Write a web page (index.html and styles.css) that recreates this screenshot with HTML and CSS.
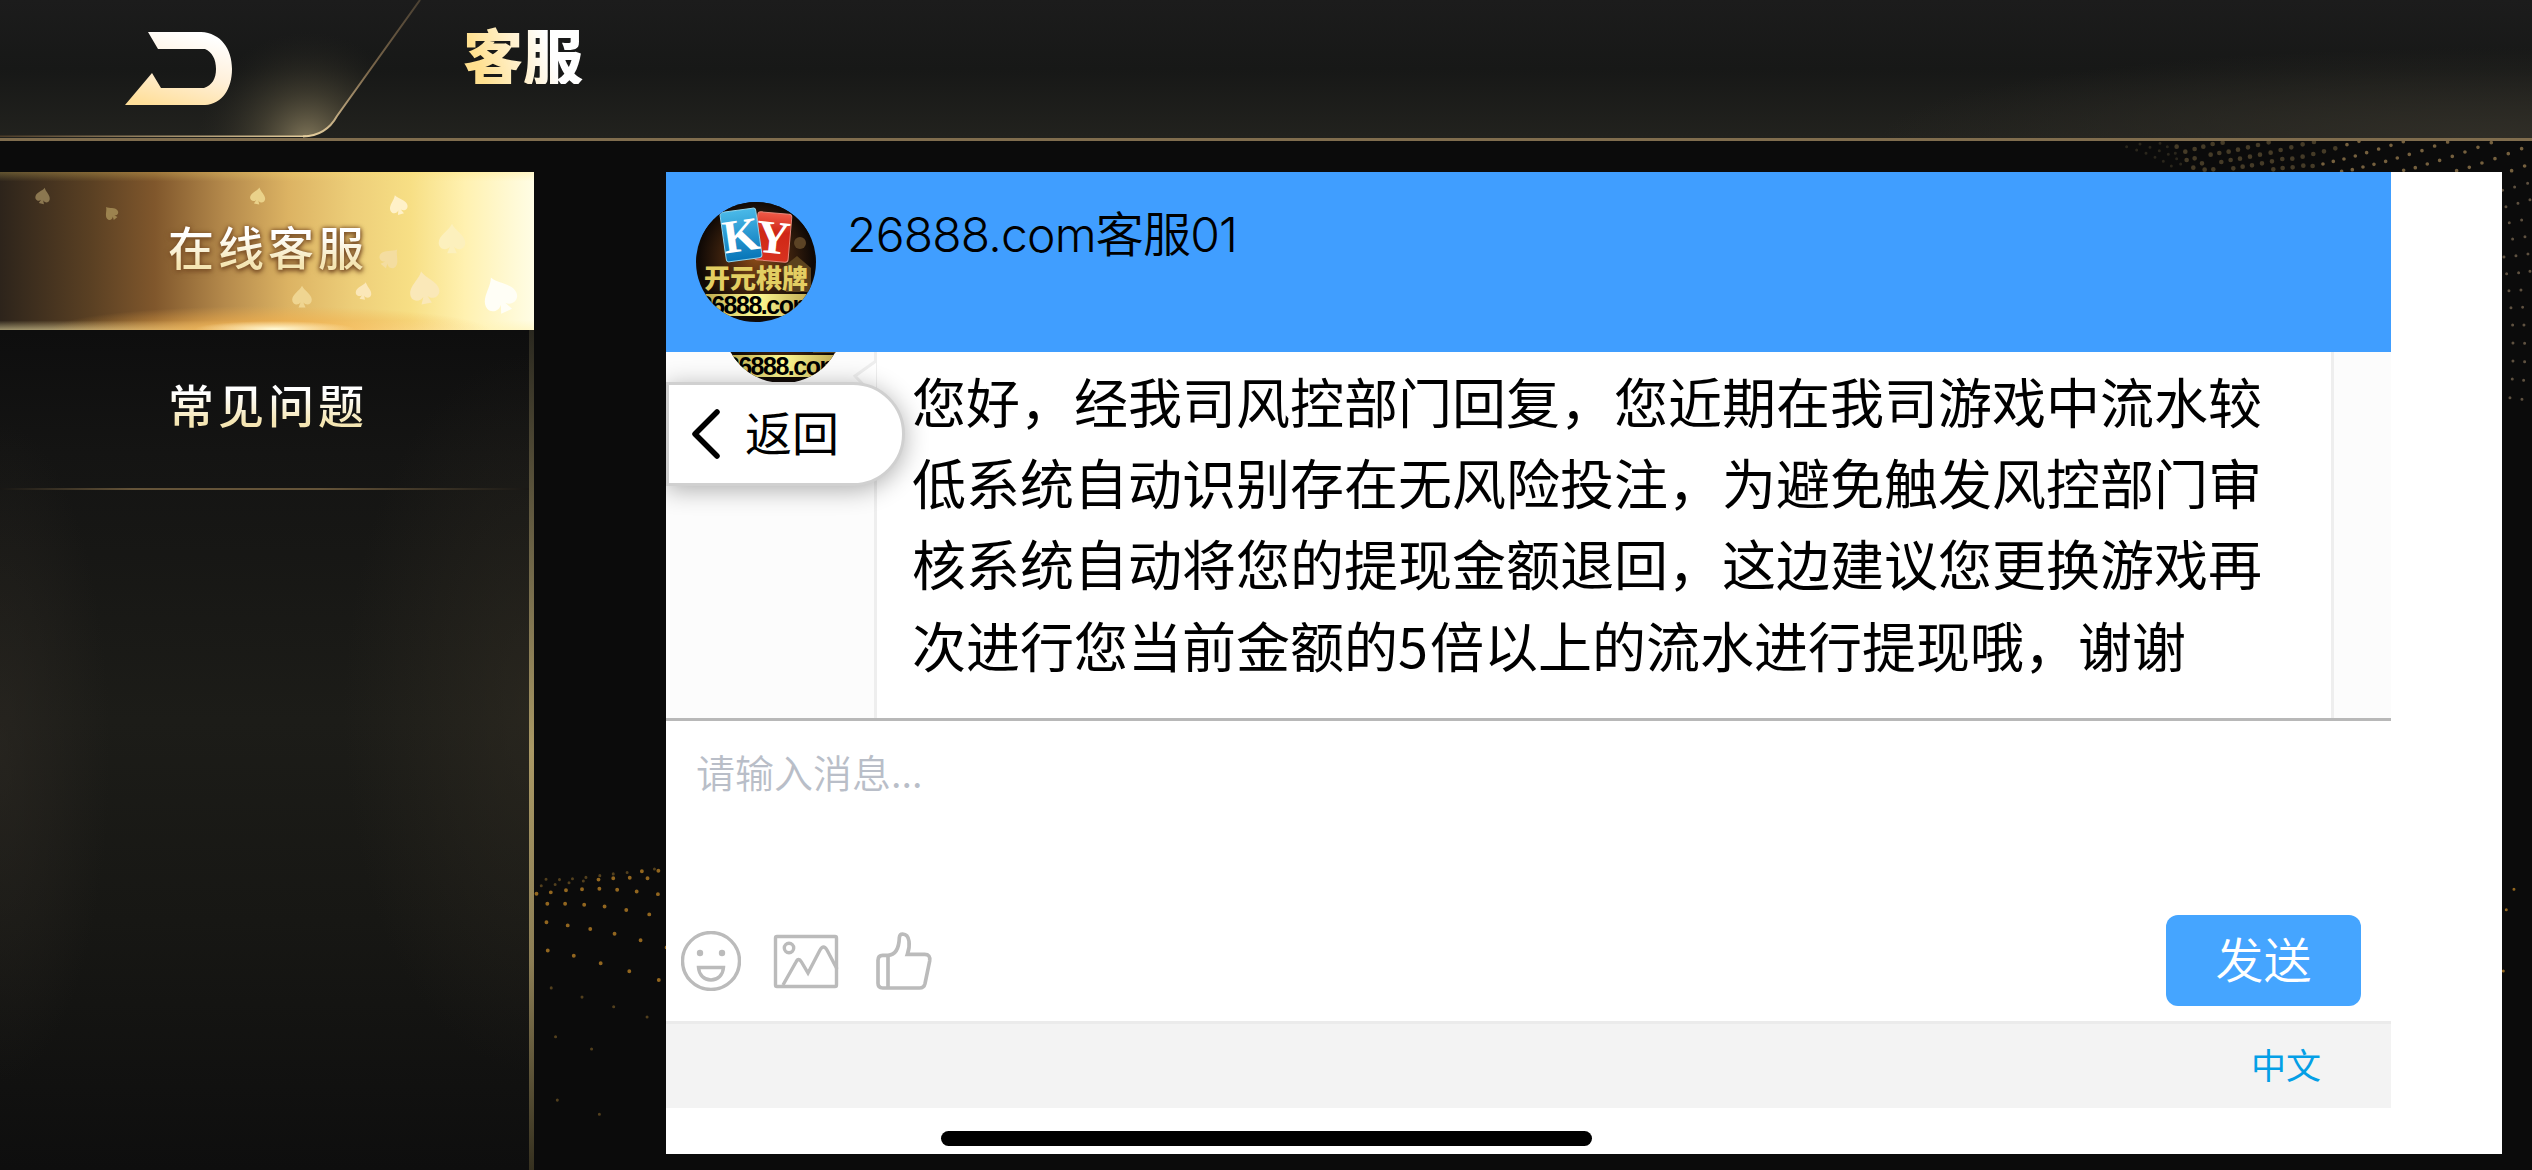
FILE: index.html
```html
<!DOCTYPE html>
<html lang="zh-CN">
<head>
    <meta charset="UTF-8">
    <title>客服</title>
    <link rel="stylesheet" href="styles.css">
</head>
<body>
    <!-- puntos dorados del fondo -->
    <svg class="dots" width="2532" height="1170" viewBox="0 0 2532 1170">
        <g transform="translate(0 480) scale(.4337 .4401)">
            <path class="dot" d="M1237 940h0M1270 937h0M1305 932h0M1342 930h0M1382 929h0M1423 931h0M1468 935h0M1517 941h0M1262 963h0M1303 963h0M1347 965h0M1394 969h0M1444 977h0M1497 987h0M1260 1005h0M1309 1012h0M1361 1020h0M1417 1031h0M1477 1046h0M1537 1062h0M1263 1069h0M1323 1081h0M1385 1098h0M1451 1116h0M1519 1136h0M1480 889h0M1518 888h0M1452 904h0M1493 905h0M1414 905h0M1380 908h0"/>
            <path class="dot dim" d="M1248 922h0M1280 919h0M1312 915h0M1345 911h0M1259 907h0M1290 908h0M1320 906h0M1351 903h0M1383 899h0M1414 895h0M1446 892h0M1509 884h0M1271 1154h0M1342 1175h0M1415 1197h0M1281 1265h0M1364 1293h0M1285 1409h0M1382 1441h0M1492 1220h0"/>
        </g>
        <g transform="translate(2060 100) scale(.3333)">
            <path class="dot gray" d="M200 140h0M230 150h0M258 160h0M285 172h0M310 184h0M334 198h0M240 132h0M270 142h0M298 152h0M325 163h0M350 176h0M300 130h0M322 140h0M346 160h0M362 192h0"/>
            <path class="dot gray big" d="M350 140h0M376 155h0M404 147h0M430 140h0M458 132h0M488 128h0M452 164h0M478 159h0M506 155h0M534 149h0M564 142h0M594 135h0M626 127h0M484 186h0M512 180h0M540 176h0M570 170h0M600 164h0M632 158h0M662 150h0M694 142h0M728 133h0M762 126h0M520 205h0M548 200h0M576 196h0M606 190h0M636 184h0M667 177h0M697 176h0M728 170h0M760 162h0M792 154h0M826 145h0M380 180h0M404 175h0M426 190h0M400 203h0M434 209h0M460 208h0M640 208h0M668 204h0M698 202h0M730 197h0M758 198h0"/>
            <path class="dot tan" d="M861 134h0M897 124h0M789 192h0M820 184h0M852 177h0M886 168h0M920 158h0M956 147h0M993 136h0M1030 125h0M845 214h0M877 209h0M909 201h0M942 193h0M977 184h0M1012 174h0M1048 163h0M1086 152h0M1124 138h0M1163 126h0M1031 211h0M1066 203h0M1102 192h0M1139 181h0M1177 169h0M1215 156h0M1254 142h0M1294 128h0M1190 212h0M1228 202h0M1266 189h0M1305 176h0M1345 161h0M1385 146h0M1355 212h0M1394 198h0"/>
            <path class="dot sand" d="M1328 271h0M1364 261h0M1403 250h0M1338 320h0M1374 310h0M1410 299h0M1348 368h0M1385 360h0M1358 417h0M1395 410h0M1332 471h0M1368 467h0M1404 462h0M1340 521h0M1376 518h0M1410 514h0M1347 572h0M1383 570h0M1353 623h0M1388 622h0M1358 675h0M1392 675h0M1359 729h0M1394 730h0M1359 783h0M1394 785h0M1357 837h0M1391 841h0M1350 893h0M1386 898h0"/>
        </g>
        <g transform="translate(2080 880) scale(.3333)">
            <path class="dot" d="M1302 28h0M1279 89h0M1270 273h0"/>
        </g>
    </svg>

    <header class="topbar">
        <!-- pestaña inclinada -->
        <svg class="topbar-tab" width="430" height="140" viewBox="0 0 430 140">
            <defs>
                <radialGradient id="tabGlow" gradientUnits="userSpaceOnUse" cx="308" cy="142" r="110">
                    <stop offset="0" stop-color="#8e8262" stop-opacity=".9"/>
                    <stop offset=".45" stop-color="#5b543f" stop-opacity=".5"/>
                    <stop offset="1" stop-color="#2a2922" stop-opacity="0"/>
                </radialGradient>
                <linearGradient id="tabLine" gradientUnits="userSpaceOnUse" x1="421" y1="0" x2="310" y2="137">
                    <stop offset="0" stop-color="#4a4032"/>
                    <stop offset=".5" stop-color="#7b674b"/>
                    <stop offset="1" stop-color="#e6cf9f"/>
                </linearGradient>
                <linearGradient id="tabBase" x1="0" x2="1">
                    <stop offset="0" stop-color="#4b3b28"/>
                    <stop offset="1" stop-color="#e6cf9f"/>
                </linearGradient>
            </defs>
            <path d="M0 0H420L337 116Q326 136 303 137H0Z" fill="url(#tabGlow)"/>
            <path d="M420 0L337 116Q326 136 303 136.500" fill="none" stroke="url(#tabLine)" stroke-width="2"/>
            <rect x="0" y="135.500" width="306" height="1.500" fill="url(#tabBase)"/>
        </svg>
        <svg class="topbar-back" width="108" height="74" viewBox="0 0 108 74">
            <defs>
                <linearGradient id="gold" x1=".25" y1="1" x2=".6" y2="0">
                    <stop offset="0" stop-color="#ffdf9a"/>
                    <stop offset=".5" stop-color="#fff0da"/>
                    <stop offset="1" stop-color="#fff"/>
                </linearGradient>
            </defs>
            <path d="M23 0H76C96 1 107 17 107 37C107 57 97 72 80 73H0L27 41L36 56H79C87 53 91 47 91 37C91 27 87 20 80 17H33Z" fill="url(#gold)"/>
        </svg>
        <h1 class="topbar-title">客服</h1>
    </header>

    <div class="main">
        <nav class="sidebar">
            <a class="menu-item active">
                <svg class="spades" width="534" height="158" viewBox="0 0 534 158">
                    <defs>
                        <path id="spade" d="M0 -16C3 -9 14 -4 14 4C14 11 6 13 2 8L5 15H-5L-2 8C-6 13 -14 11 -14 4C-14 -4 -3 -9 0 -16Z"/>
                    </defs>
                    <use href="#spade" fill="#8b7750" transform="translate(43 24) rotate(12) scale(.52)"/>
                    <use href="#spade" fill="#9c834f" transform="translate(111 41) rotate(-40) scale(.48)"/>
                    <use href="#spade" fill="#ead28a" transform="translate(258 24) rotate(10) scale(.54)"/>
                    <use href="#spade" fill="#fff1c8" transform="translate(398 33) rotate(-18) scale(.64)"/>
                    <use href="#spade" fill="#fcf0bd" transform="translate(452 67) scale(.95)"/>
                    <use href="#spade" fill="#f4dda0" transform="translate(390 86) rotate(40) scale(.7)"/>
                    <use href="#spade" fill="#efd591" transform="translate(302 125) scale(.7)"/>
                    <use href="#spade" fill="#fbe7b8" transform="translate(364 119) rotate(12) scale(.56)"/>
                    <use href="#spade" fill="#fae8b8" transform="translate(424 116) rotate(-10) scale(1.050)"/>
                    <use href="#spade" fill="#fffef6" transform="translate(499 123) rotate(-25) scale(1.200)"/>
                </svg>
                <span class="menu-text">在线客服</span>
            </a>
            <a class="menu-item">
                <span class="menu-text">常见问题</span>
            </a>
        </nav>

        <div class="panel">
            <div class="chat">
                <div class="chat-header">
                    <svg class="avatar" width="120" height="120" viewBox="0 0 120 120">
                        <defs>
                            <clipPath id="round"><circle cx="60" cy="60" r="60"/></clipPath>
                            <radialGradient id="brown">
                                <stop offset="0" stop-color="#8a4b17"/>
                                <stop offset=".6" stop-color="#3a200d"/>
                                <stop offset="1" stop-color="#0e0805"/>
                            </radialGradient>
                            <linearGradient id="blueCard" x1="0" y1="0" x2="0" y2="1">
                                <stop offset="0" stop-color="#4ab9e8"/>
                                <stop offset="1" stop-color="#0775b8"/>
                            </linearGradient>
                            <linearGradient id="redCard" x1="0" y1="0" x2="0" y2="1">
                                <stop offset="0" stop-color="#ef5a48"/>
                                <stop offset=".4" stop-color="#cf2716"/>
                                <stop offset="1" stop-color="#d8321f"/>
                            </linearGradient>
                            <linearGradient id="goldBar">
                                <stop offset="0" stop-color="#b09a41"/>
                                <stop offset=".5" stop-color="#fffa91"/>
                                <stop offset="1" stop-color="#b8a04c"/>
                            </linearGradient>
                            <g id="logo" clip-path="url(#round)">
                                <rect width="120" height="120" fill="#100a06"/>
                                <circle cx="60" cy="56" r="58" fill="url(#brown)"/>
                                <path d="M86 66L101 54L115 66V90H90Z" fill="#5b421d"/>
                                <circle cx="104" cy="41" r="6" fill="#5c4325"/>
                                <rect x="60" y="11" width="34" height="48" rx="3" fill="url(#redCard)" stroke="#e58779" transform="rotate(5 77 35)"/>
                                <rect x="27" y="8" width="36" height="50" rx="3" fill="url(#blueCard)" stroke="#8ed4ee" transform="rotate(-8 45 33)"/>
                                <text class="logo-letter" x="45" y="49" transform="rotate(-8 45 33)">K</text>
                                <text class="logo-letter" x="77" y="51" transform="rotate(6 77 35)">Y</text>
                                <text class="logo-name" x="60" y="86">开元棋牌</text>
                                <rect x="0" y="92" width="120" height="22" fill="url(#goldBar)"/>
                                <text class="logo-site" x="60" y="112">26888.com</text>
                            </g>
                        </defs>
                        <use href="#logo"/>
                    </svg>
                    <span class="chat-name">26888.com客服01</span>
                </div>

                <div class="messages">
                    <div class="message">
                        <svg class="avatar message-avatar" width="120" height="120" viewBox="0 0 120 120">
                            <use href="#logo"/>
                        </svg>
                        <svg class="bubble-tail" width="24" height="46" viewBox="0 0 24 46">
                            <path d="M23 5L2 20L23 42" fill="#fff" stroke="#eee" stroke-width="3"/>
                        </svg>
                        <p class="bubble">您好，经我司风控部门回复，您近期在我司游戏中流水较<br>低系统自动识别存在无风险投注，为避免触发风控部门审<br>核系统自动将您的提现金额退回，这边建议您更换游戏再<br>次进行您当前金额的<span class="digit">5</span>倍以上的流水进行提现哦，谢谢</p>
                    </div>
                </div>

                <div class="editor">
                    <div class="placeholder">请输入消息...</div>
                    <div class="tools">
                        <svg width="60" height="60" viewBox="0 0 60 60">
                            <circle cx="30" cy="30" r="28.500"/>
                            <circle class="fill" cx="19" cy="22" r="3.200"/>
                            <circle class="fill" cx="41" cy="22" r="3.200"/>
                            <path d="M17.500 36.500H42.500C42 44 37 49 30 49C23 49 18 44 17.500 36.500Z"/>
                        </svg>
                        <svg width="66" height="60" viewBox="0 0 66 60">
                            <rect x="2.500" y="5.500" width="61" height="50" rx="1.500"/>
                            <circle cx="16" cy="17" r="4.700"/>
                            <path d="M10 54L23 31Q25.500 26 28.500 31L35 42L47 19Q50.500 13 54 19L64 38"/>
                        </svg>
                        <svg class="thumb-icon" width="60" height="60" viewBox="0 0 180 180">
                            <path class="thumb" d="M42 73H26Q12 73 12 88V157Q12 171 26 171H137Q150 171 153 158L167 90Q170 70 152 70H100C109 45 109 10 86 9Q77 9 76 20C75 50 66 72 42 73V171"/>
                        </svg>
                        <button class="send">发送</button>
                    </div>
                </div>

                <div class="chat-footer">中文</div>
            </div>

            <a class="back">
                <svg width="30" height="50" viewBox="0 0 30 50">
                    <path d="M26 3L4 25L26 47" fill="none" stroke="#000" stroke-width="5.500" stroke-linecap="round" stroke-linejoin="round"/>
                </svg>
                <span class="back-text">返回</span>
            </a>
            <div class="home-bar"></div>
        </div>
    </div>
</body>
</html>
```
FILE: styles.css
```css
* {
    box-sizing: border-box;
}

body {
    margin: 0;
    width: 2532px;
    height: 1170px;
    overflow: hidden;
    position: relative;
    display: flex;
    flex-direction: column;
    background-color: #0b0b0b;
    font-family: "Noto Sans CJK SC", sans-serif;
}

/* Fondo */
.dots {
    position: absolute;
    top: 0;
    left: 0;
}

.dot {
    fill: none;
    stroke: #92661f;
    stroke-width: 9;
    stroke-linecap: round;
}

.dim {
    stroke: #53401d;
    stroke-width: 7;
}

.gray {
    stroke: #2a261c;
}

.big {
    stroke: #453b27;
    stroke-width: 14;
}

.tan {
    stroke: #75603e;
    stroke-width: 11;
}

.sand {
    stroke: #5e5140;
    stroke-width: 9;
}

/* Barra superior */
.topbar {
    position: relative;
    display: flex;
    align-items: flex-start;
    height: 141px;
    padding: 32px 0 0 125px;
    border-bottom: 3px solid #806d4e;
    background: radial-gradient(ellipse 600px 90px at 2480px 138px, #302e27, transparent),
        linear-gradient(#1c1c1c, #171817 50%, #22221e);
}

.topbar-tab {
    position: absolute;
    top: 0;
    left: 0;
}

.topbar-back {
    position: relative;
}

.topbar-title {
    margin: -8px 0 0 230px;
    font-size: 60px;
    line-height: 60px;
    font-weight: 900;
    background: linear-gradient(70deg, #ffe08f 15%, #fff3d6 50%, #fff 70%);
    -webkit-background-clip: text;
    background-clip: text;
    color: transparent;
}

.main {
    position: relative;
    display: flex;
    flex: 1;
    padding-top: 31px;
}

/* Menú lateral */
.sidebar {
    position: relative;
    width: 534px;
    height: 998px;
    background: radial-gradient(ellipse 190px 360px at 534px 540px, #35302580, transparent),
        radial-gradient(ellipse 110px 330px at 0 580px, #2e2a2490, transparent),
        linear-gradient(#0e0e0e 16%, #141413 28%, #1c1c18 55%, #171714 75%, #0e0e0e);
}

/* línea dorada del borde derecho */
.sidebar::after {
    content: "";
    position: absolute;
    top: 158px;
    right: 0;
    width: 5px;
    bottom: 0;
    background: linear-gradient(#2a281f, #756b4b 30%, #aa9965 50%, #8c7e55 75%, #35301f);
}

.menu-item {
    position: relative;
    display: flex;
    align-items: center;
    height: 158px;
    padding: 0 0 12px 168px;
    border-bottom: 2px solid;
    border-image: linear-gradient(90deg, #171614, #655439 25%, #655439 60%, #171614) 1;
}

.menu-item + .menu-item {
    height: 160px;
}

.active {
    border: none;
    background: radial-gradient(ellipse 80px 8px at 275px 157px, #fffad8, transparent),
        radial-gradient(ellipse 220px 24px at 270px 158px, #f3b04c, transparent),
        linear-gradient(#ffe07040, transparent 6%, transparent 94%, #fff3b488),
        linear-gradient(90deg, #2d241b, #5a4023 17%, #80572c 29%, #b4894b 42%, #dcb363 54%, #edce79 66%, #f7df85 77%, #fff1b0 87%, #fffde5);
}

.spades {
    position: absolute;
    top: 0;
    left: 0;
}

.menu-text {
    position: relative;
    font-size: 46px;
    line-height: 64px;
    letter-spacing: 4px;
    font-weight: 500;
    background: linear-gradient(#fff 35%, #f4e5b2 80%);
    -webkit-background-clip: text;
    background-clip: text;
    color: transparent;
}

.active .menu-text {
    filter: drop-shadow(0 0 2px #7d5228) drop-shadow(0 2px 2px #7d5228);
}

/* Panel blanco */
.panel {
    position: relative;
    width: 1836px;
    height: 982px;
    margin-left: 132px;
    background-color: #fff;
}

.chat {
    display: flex;
    flex-direction: column;
    width: 1725px;
}

.chat-header {
    display: flex;
    align-items: flex-start;
    height: 180px;
    padding: 30px;
    background-color: #409eff;
}

.chat-name {
    margin: -2px 0 0 31px;
    font-family: Inter, "Noto Sans CJK SC", sans-serif;
    font-size: 48px;
    line-height: 70px;
    letter-spacing: -.8px;
    font-weight: 350;
    color: #000;
}

.logo-letter {
    font: bold 47px "Liberation Serif", serif;
    fill: #fff;
    text-anchor: middle;
}

.logo-name {
    font: 900 26px "Noto Sans CJK SC", sans-serif;
    fill: #e3ce62;
    text-anchor: middle;
}

.logo-site {
    font: bold 25px "Liberation Sans", sans-serif;
    letter-spacing: -1.500px;
    fill: #000;
    text-anchor: middle;
}

.messages {
    height: 366px;
    overflow: hidden;
    background-color: #fcfcfc;
}

/* la conversación está desplazada hacia abajo */
.message {
    position: relative;
    display: flex;
    align-items: flex-start;
    margin-top: -89px;
    padding-left: 57px;
}

.bubble {
    width: 1460px;
    height: 480px;
    margin: 0 0 0 31px;
    padding: 94px 0 0 35px;
    border: 3px solid #eee;
    background-color: #fff;
    font-size: 54px;
    line-height: 81.200px;
    white-space: nowrap;
    color: #000;
}

.digit {
    letter-spacing: 2px;
}

.bubble-tail {
    position: absolute;
    top: 93px;
    left: 187px;
}

.editor {
    height: 303px;
    padding: 24px 30px 30px;
    border-top: 3px solid #b8b8b8;
    display: flex;
    flex-direction: column;
    justify-content: space-between;
}

.placeholder {
    font-size: 39px;
    line-height: 52px;
    font-weight: 350;
    color: #b9bec8;
}

.tools {
    display: flex;
    align-items: center;
    gap: 32px;
    margin: 0 0 -15px -15px;
}

.tools svg {
    fill: none;
    stroke: #bbb;
    stroke-width: 3.400;
}

.tools .fill {
    fill: #bbb;
    stroke: none;
}

.thumb-icon {
    margin-left: 3px;
}

.tools .thumb {
    stroke-width: 11;
}

.send {
    width: 195px;
    height: 91px;
    margin-left: auto;
    padding: 0 0 7px;
    border: none;
    border-radius: 12px;
    background-color: #45a5ff;
    color: #fff;
    font-family: inherit;
    font-size: 48px;
    font-weight: 350;
}

.chat-footer {
    height: 87px;
    padding-right: 70px;
    border-top: 3px solid #ebebeb;
    background-color: #f3f3f3;
    color: #049fe6;
    font-size: 35px;
    line-height: 80px;
    font-weight: 400;
    text-align: right;
}

/* Botón flotante para volver */
.back {
    position: absolute;
    top: 210px;
    left: 0;
    display: flex;
    align-items: center;
    gap: 24px;
    width: 239px;
    height: 104px;
    padding-left: 22px;
    border: 3px solid #d0d0d0;
    border-radius: 0 52px 52px 0;
    background-color: #fff;
    box-shadow: 0 4px 24px #00000050;
    clip-path: inset(-40px -40px -40px 0);
    font-size: 47px;
    color: #000;
}

.back-text {
    padding-bottom: 8px;
}

.home-bar {
    position: absolute;
    left: 275px;
    bottom: 8px;
    width: 651px;
    height: 15px;
    border-radius: 8px;
    background-color: #000;
}
```
